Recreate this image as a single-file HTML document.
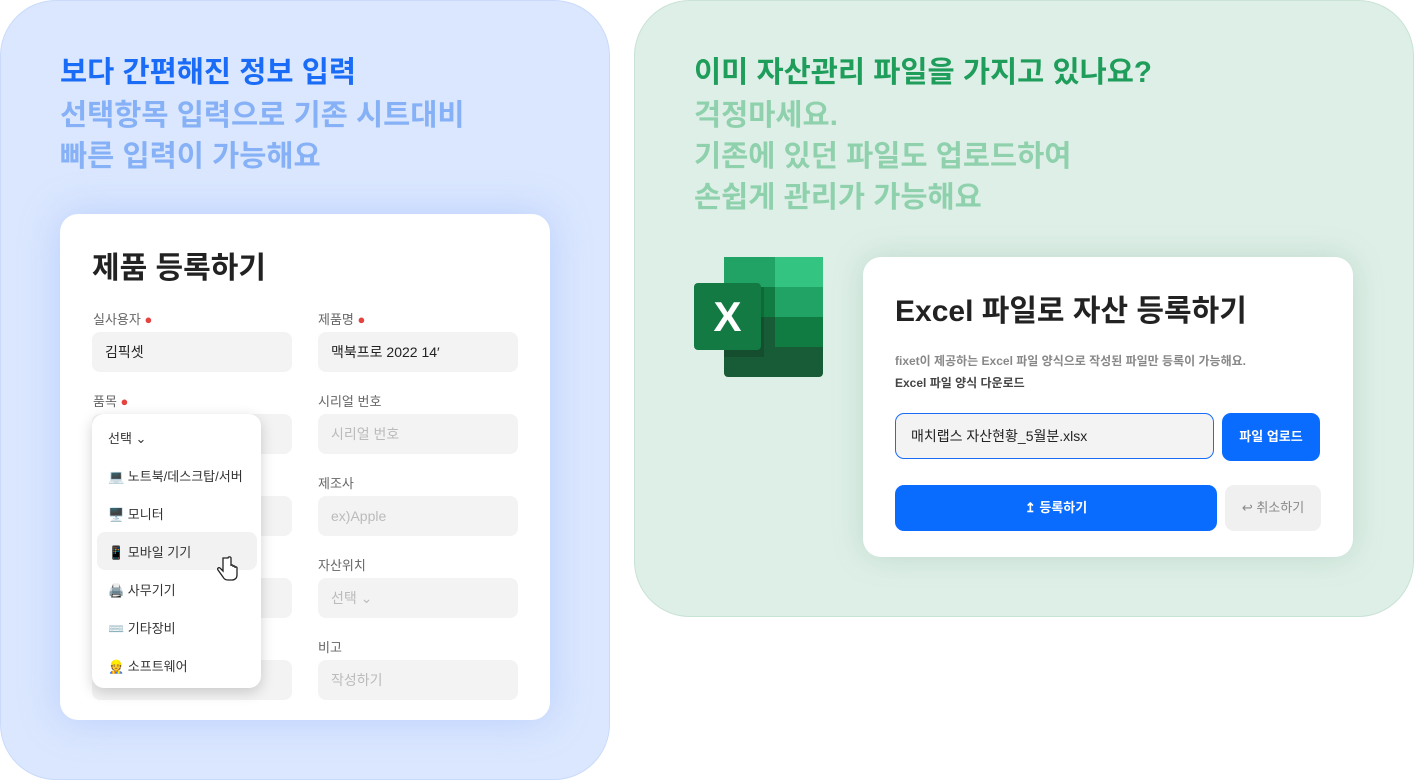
<!DOCTYPE html>
<html><head><meta charset="utf-8"><style>
*{margin:0;padding:0;box-sizing:border-box}
body{width:1414px;height:780px;background:#fff;font-family:"Liberation Sans","Noto Sans CJK KR",sans-serif;position:relative;overflow:hidden}
.abs{position:absolute}
.lp{left:0;top:0;width:610px;height:780px;background:#dbe7fe;border:1px solid #c9dafa;border-radius:56px}
.rp{left:634px;top:0;width:780px;height:617px;background:#deefe7;border:1px solid #c8e2d5;border-radius:56px}
.h{font-size:29.5px;font-weight:700;line-height:41px;white-space:nowrap}
.card{background:#fff;border-radius:18px}
.lbl{font-size:13px;color:#666}
.dot{color:#e5433f}
.inp{background:#f3f3f3;border-radius:8px;height:40px;font-size:14px;padding:0 13px;line-height:40px;color:#222}
.ph{color:#bbb}
.mi{font-size:13px;color:#333;position:absolute;left:16px}
</style></head><body>
<div class="abs lp"></div>
<div class="abs rp"></div>
<div class="abs h" style="left:60px;top:52px;color:#1a6cf6">보다 간편해진 정보 입력</div>
<div class="abs h" style="left:60px;top:95px;color:#86b1f6">선택항목 입력으로 기존 시트대비<br>빠른 입력이 가능해요</div>
<div class="abs card" style="left:60px;top:214px;width:490px;height:506px;box-shadow:0 0 40px rgba(120,160,250,.35)"></div>
<div class="abs" style="left:92px;top:243px;font-size:30px;font-weight:700;color:#222">제품 등록하기</div>
<div class="abs lbl" style="left:93px;top:309px">실사용자 <span class="dot">●</span></div>
<div class="abs lbl" style="left:318px;top:309px">제품명 <span class="dot">●</span></div>
<div class="abs inp" style="left:92px;top:332px;width:200px">김픽셋</div>
<div class="abs inp" style="left:318px;top:332px;width:200px">맥북프로 2022 14′</div>
<div class="abs lbl" style="left:93px;top:391px">품목 <span class="dot">●</span></div>
<div class="abs lbl" style="left:318px;top:391px">시리얼 번호</div>
<div class="abs inp" style="left:92px;top:414px;width:200px"></div>
<div class="abs inp ph" style="left:318px;top:414px;width:200px">시리얼 번호</div>
<div class="abs lbl" style="left:318px;top:473px">제조사</div>
<div class="abs inp" style="left:92px;top:496px;width:200px"></div>
<div class="abs inp ph" style="left:318px;top:496px;width:200px">ex)Apple</div>
<div class="abs lbl" style="left:318px;top:555px">자산위치</div>
<div class="abs inp" style="left:92px;top:578px;width:200px"></div>
<div class="abs inp ph" style="left:318px;top:578px;width:200px">선택 ⌄</div>
<div class="abs lbl" style="left:318px;top:637px">비고</div>
<div class="abs inp" style="left:92px;top:660px;width:200px"></div>
<div class="abs inp ph" style="left:318px;top:660px;width:200px">작성하기</div>
<div class="abs" style="left:92px;top:414px;width:169px;height:274px;background:#fff;border-radius:12px;box-shadow:0 4px 14px rgba(0,0,0,.18)">
<div class="abs" style="left:5px;top:118px;width:160px;height:38px;background:#f2f2f2;border-radius:8px"></div>
<div class="mi" style="top:14px">선택 ⌄</div>
<div class="mi" style="top:52px">💻 노트북/데스크탑/서버</div>
<div class="mi" style="top:90px">🖥️ 모니터</div>
<div class="mi" style="top:128px">📱 모바일 기기</div>
<div class="mi" style="top:166px">🖨️ 사무기기</div>
<div class="mi" style="top:204px">⌨️ 기타장비</div>
<div class="mi" style="top:242px">👷 소프트웨어</div>
<svg class="abs" style="left:125px;top:142px" width="22" height="26" viewBox="0 0 22 26"><path d="M6 2v13l-3-3c-1.5-1-3 .5-2 2l5 7c1 2 3 3 5 3h4c3 0 5-2 5-5v-7c0-1.5-2-1.5-2 0v-1c0-1.5-2-1.5-2 0v-1c0-1.5-2-1.5-2 0V2c0-1.5-3-1.5-3 0z" fill="#fff" stroke="#222" stroke-width="1.3"/></svg>
</div>

<div class="abs h" style="left:694px;top:52px;color:#1f9d5b">이미 자산관리 파일을 가지고 있나요?</div>
<div class="abs h" style="left:694px;top:95px;color:#8fd1ad">걱정마세요.<br>기존에 있던 파일도 업로드하여<br>손쉽게 관리가 가능해요</div>
<svg class="abs" style="left:694px;top:257px" width="130" height="121" viewBox="0 0 130 121">
<rect x="30" y="0" width="99" height="120" rx="4" fill="#185c37"/>
<rect x="30" y="0" width="51" height="30" fill="#21a366"/>
<rect x="81" y="0" width="48" height="30" fill="#33c481"/>
<rect x="30" y="30" width="51" height="30" fill="#107c41"/>
<rect x="81" y="30" width="48" height="30" fill="#21a366"/>
<rect x="30" y="60" width="51" height="30" fill="#185c37"/>
<rect x="81" y="60" width="48" height="30" fill="#107c41"/>
<rect x="30" y="30" width="40" height="70" fill="#000" opacity=".15"/>
<rect x="0" y="26" width="67" height="67" rx="4" fill="#137a43"/>
<text x="33.5" y="74" text-anchor="middle" font-family="Liberation Sans" font-weight="700" font-size="42" fill="#fff">X</text>
</svg>
<div class="abs card" style="left:863px;top:257px;width:490px;height:300px;box-shadow:0 0 30px rgba(100,160,130,.25)"></div>
<div class="abs" style="left:895px;top:286px;font-size:30px;font-weight:700;color:#222">Excel 파일로 자산 등록하기</div>
<div class="abs" style="left:895px;top:350px;font-size:12px;color:#888;font-weight:700;line-height:22px">fixet이 제공하는 Excel 파일 양식으로 작성된 파일만 등록이 가능해요.<br><span style="color:#444">Excel 파일 양식 다운로드</span></div>
<div class="abs" style="left:895px;top:413px;width:319px;height:46px;border:1px solid #1a6cf6;border-radius:9px;background:#f3f3f3;font-size:14px;line-height:44px;padding-left:15px;color:#222">매치랩스 자산현황_5월분.xlsx</div>
<div class="abs" style="left:1222px;top:413px;width:98px;height:48px;background:#0a6cff;border-radius:9px;color:#fff;font-size:13px;font-weight:700;text-align:center;line-height:48px">파일 업로드</div>
<div class="abs" style="left:895px;top:485px;width:322px;height:46px;background:#0a6cff;border-radius:9px;color:#fff;font-size:13px;font-weight:700;text-align:center;line-height:46px">↥ 등록하기</div>
<div class="abs" style="left:1225px;top:485px;width:96px;height:46px;background:#f0f0f0;border-radius:9px;color:#888;font-size:13px;text-align:center;line-height:46px">↩ 취소하기</div>
</body></html>
